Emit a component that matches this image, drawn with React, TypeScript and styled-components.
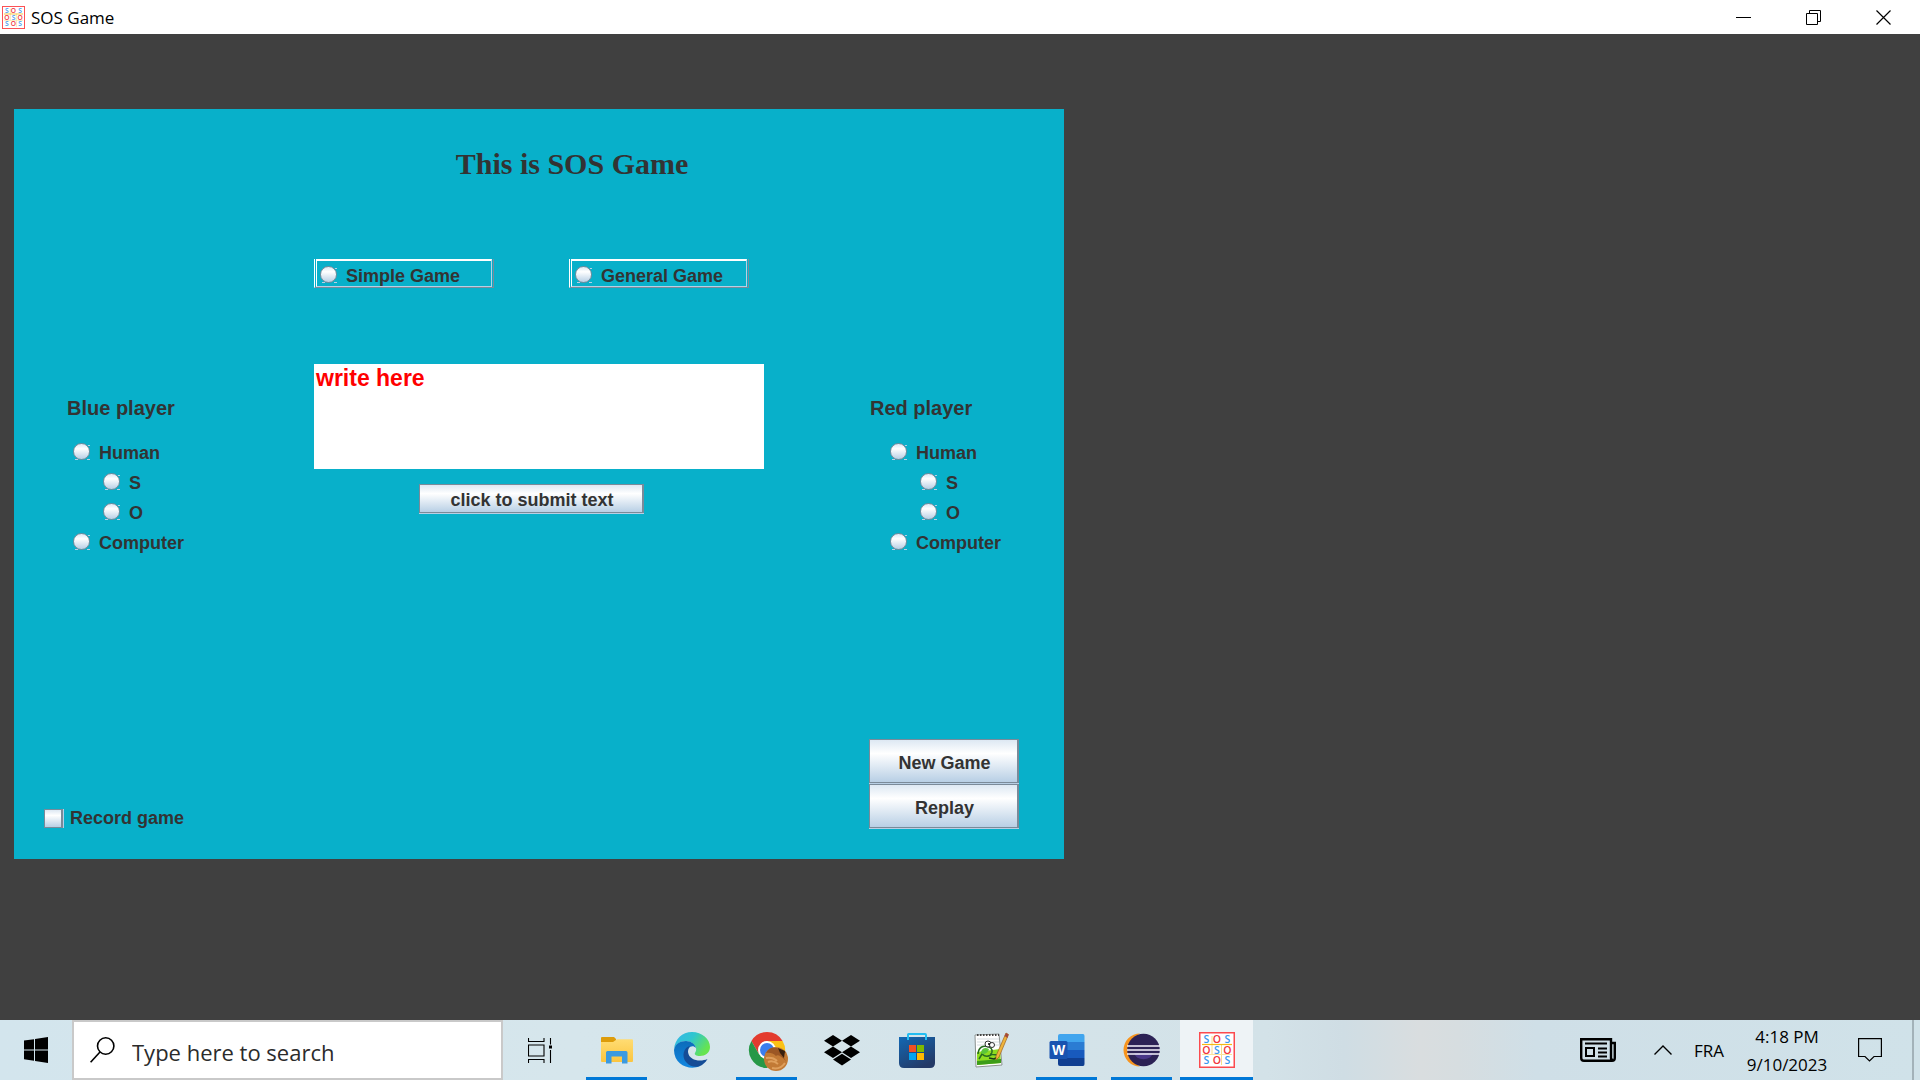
import React from 'react';
import styled, { createGlobalStyle, css } from 'styled-components';

const GlobalStyle = createGlobalStyle`
  *, *::before, *::after { box-sizing: border-box; }
  body { margin: 0; background: #404040; }
  button, input, textarea { font: inherit; color: inherit; margin: 0; }
`;

const uiFont = `'Segoe UI', 'Open Sans', 'Noto Sans', sans-serif`;
const swingFont = `Arial, 'Liberation Sans', sans-serif`;
const steel = '#7a8a99';
const mist = '#b8cfe5';
const metal = `linear-gradient(#dde8f3, #ffffff 32%, #b8cfe5)`;

const Screen = styled.div`
  display: flex;
  flex-direction: column;
  min-height: 100vh;
  background: #404040;
  color: #000;
  font-family: ${uiFont};
`;

/* ---------- window frame ---------- */

const TitleBar = styled.header`
  display: flex;
  align-items: center;
  height: 34px;
  padding: 0 2px;
  background: #fff;
`;

const WindowTitle = styled.h1`
  flex: 1;
  margin: 0 0 0 6px;
  padding-top: 1px;
  font-size: 17px;
  font-weight: 400;
  line-height: 24px;
`;

const WindowButton = styled.button`
  display: grid;
  place-items: center;
  width: 70px;
  height: 34px;
  padding: 0;
  border: 0;
  background: none;
`;

const Stage = styled.main`
  flex: 1;
  padding: 75px 14px 32px;
`;

/* ---------- game panel ---------- */

const Panel = styled.form`
  max-width: 1050px;
  background: #08b0ca;
  color: #333;
  font-family: ${swingFont};
  font-size: 18px;
  font-weight: 700;
  line-height: 24px;
`;

const Heading = styled.h2`
  margin: 0;
  padding: 37px 0 77px 66px;
  font-family: 'Times New Roman', 'Liberation Serif', serif;
  font-size: 30px;
  line-height: 36px;
  text-align: center;
`;

const Columns = styled.div`
  display: grid;
  grid-template-columns: 2fr 3fr 2fr;
`;

const Modes = styled.div`
  grid-column: 2;
  display: flex;
  gap: 75px;
  padding-bottom: 76px;
`;

const ModeFrame = styled.div`
  width: 180px;
  padding-left: 1px;
  border-left: 1px solid #fff;
  border-right: 1px solid ${steel};
  border-bottom: 1px solid ${steel};
`;

const ModeInner = styled.div`
  height: 28px;
  margin-right: 1px;
  padding: 2px 0 0 3px;
  border: 1px solid ${mist};
  border-top: 2px solid #fff;
  border-left-color: #fff;
`;

const Option = styled.label<{ $nested?: boolean }>`
  display: flex;
  align-items: center;
  gap: 9px;
  height: 30px;
  padding-left: ${(p) => (p.$nested ? 30 : 0)}px;
`;

const ModeOption = styled(Option)`
  height: 26px;
`;

const Radio = styled.input.attrs({ type: 'radio' })`
  appearance: none;
  flex: none;
  width: 17px;
  height: 17px;
  margin-bottom: 4px;
  background:
    linear-gradient(${mist}, ${mist}) 2px 100% / 3px 1px no-repeat,
    linear-gradient(${mist}, ${mist}) 100% 100% / 3px 1px no-repeat,
    linear-gradient(${mist}, ${mist}) 100% 2px / 2px 1px no-repeat;

  &::before {
    content: '';
    display: block;
    width: 17px;
    height: 17px;
    border: 1px solid ${steel};
    border-radius: 50%;
    background: ${metal};
  }

  &:checked::before {
    background: radial-gradient(circle, #333 4px, #e8f0f8 5px);
  }
`;

const Message = styled.textarea`
  display: block;
  width: 100%;
  height: 105px;
  padding: 1px 2px;
  border: 0;
  outline: 0;
  resize: none;
  overflow: hidden;
  background: #fff;
  color: #f00;
  font-size: 23px;
  line-height: 27px;
`;

const Composer = styled.div`
  display: flex;
  flex-direction: column;
  gap: 15px;
`;

const MetalButton = styled.button<{ $tall?: boolean }>`
  height: ${(p) => (p.$tall ? 44 : 29)}px;
  padding: 3px 0 0 2px;
  border: 1px solid ${steel};
  border-right-width: 2px;
  box-shadow: 0 1px 0 ${mist};
  background: ${metal};
`;

const SubmitButton = styled(MetalButton)`
  width: 50%;
  margin-left: 105px;
`;

const Player = styled.fieldset<{ $inset: number }>`
  min-width: 0;
  margin: 0;
  padding: 32px 0 0 ${(p) => p.$inset}px;
  border: 0;
`;

const PlayerName = styled.legend`
  float: left;
  width: 100%;
  padding: 0;
  margin-bottom: 18px;
  font-size: 20px;
`;

const Choices = styled.div<{ $indent: number }>`
  clear: both;
  padding-left: ${(p) => p.$indent}px;
`;

const PanelFooter = styled.div`
  display: flex;
  justify-content: space-between;
  align-items: flex-end;
  padding: 181px 45px 31px 30px;
`;

const Record = styled.label`
  display: flex;
  align-items: center;
  gap: 7px;
  line-height: 20px;
`;

const CheckBox = styled.input.attrs({ type: 'checkbox' })`
  appearance: none;
  width: 19px;
  height: 19px;
  border: 1px solid ${steel};
  border-right-width: 2px;
  box-shadow: 1px 0 0 ${mist};
  background: ${metal};

  &:checked { background: #333; }
`;

const GameActions = styled.div`
  display: flex;
  flex-direction: column;
  gap: 1px;
  width: 150px;
`;

/* ---------- taskbar ---------- */

const Taskbar = styled.footer`
  display: flex;
  height: 60px;
  background: linear-gradient(90deg, #d3e5ed, #d6e6ec 30%, #d3e2e8 66%, #cfdde4 70%, #d9dddf 74%, #d6dde0 76%, #cfdfe7 80%, #d0e2e9);
`;

const StartButton = styled.button`
  width: 72px;
  padding: 0;
  display: grid;
  place-items: center;
  border: 0;
  background: none;
`;

const Search = styled.label`
  display: flex;
  align-items: center;
  gap: 17px;
  width: 431px;
  padding-left: 16px;
  border: 2px solid #c9c9c9;
  background: #fff;
`;

const SearchInput = styled.input`
  flex: 1;
  min-width: 0;
  padding: 3px 0 0;
  border: 0;
  outline: 0;
  background: none;
  font-size: 22px;
  line-height: 30px;

  &::placeholder { color: #2b2b2b; opacity: 1; }
`;

const TaskView = styled.button`
  width: 76px;
  padding: 0 2px 0 0;
  border: 0;
  background: none;
  display: grid;
  place-items: center;
`;

const Apps = styled.nav`
  display: flex;
  flex: 1;
`;

const running = css`
  border-bottom-color: #0078d7;
`;

const AppButton = styled.button<{ $running?: boolean; $active?: boolean }>`
  display: grid;
  place-items: center;
  width: ${(p) => (p.$active ? 73 : 61)}px;
  margin: 0 ${(p) => (p.$active ? 1 : 7)}px;
  padding: 3px 0 0;
  border: 0;
  border-bottom: 3px solid transparent;
  background: ${(p) => (p.$active ? '#eef3f6' : 'none')};
  background-clip: padding-box;
  ${(p) => (p.$running || p.$active) && running}

  svg { overflow: visible; }
`;

const Tray = styled.div`
  display: flex;
  align-items: stretch;
`;

const TrayButton = styled.button<{ $width: number }>`
  display: grid;
  place-items: center;
  width: ${(p) => p.$width}px;
  padding: 0;
  border: 0;
  background: none;
  white-space: nowrap;
  font-size: 17px;
`;

const Clock = styled(TrayButton)`
  display: block;
  padding-top: 2px;
  line-height: 28px;

  time { display: block; }
`;

const ShowDesktop = styled.button`
  width: 8px;
  padding: 0;
  border: 0;
  border-left: 2px solid #a3b2b9;
  background: none;
`;

/* ---------- icons ---------- */

const RED = '#f0353c';
const BLUE = '#3b96ee';

const SosIcon = ({ size }: { size: number }) => (
  <svg width={size} height={size} viewBox="0 0 36 36" aria-hidden="true">
    <rect x="0.75" y="0.75" width="34.5" height="34.5" fill="#fff" stroke="#fb4b4f" strokeWidth="1.5" />
    <path d="M13 4V23M22.5 12V33" stroke="#f8dc8a" strokeWidth="1" />
    <path d="M3 12.5H33" stroke="#f5b915" strokeWidth="1.2" />
    <path d="M3 22.5H33" stroke="#fae29c" strokeWidth="1" />
    <g fontFamily="'Open Sans', sans-serif" fontSize="10.5" fontWeight="600" textAnchor="middle">
      {['SOS', 'OSO', 'SOS'].map((row, y) =>
        row.split('').map((letter, x) => (
          <text key={`${x}${y}`} x={7.5 + x * 10.5} y={11.3 + y * 10.3} fill={letter === 'S' ? BLUE : RED}>
            {letter}
          </text>
        )),
      )}
    </g>
  </svg>
);

const MinimizeIcon = () => (
  <svg width="15" height="15" aria-hidden="true"><path d="M0 7.5H15" stroke="#000" /></svg>
);
const RestoreIcon = () => (
  <svg width="15" height="15" fill="none" stroke="#000" aria-hidden="true">
    <path d="M.5 3.5H11.5V14.5H.5ZM3.5 3.5V.5H14.5V11.5H11.5" />
  </svg>
);
const CloseIcon = () => (
  <svg width="15" height="15" stroke="#000" strokeWidth="1.2" aria-hidden="true"><path d="M.5 .5L14.5 14.5M14.5 .5L.5 14.5" /></svg>
);

const WindowsIcon = () => (
  <svg width="24" height="26" viewBox="0 0 24 26" aria-hidden="true">
    <path d="M0 3.6L10 2.2V12.4H0ZM11 2L24 0V12.4H11ZM0 13.4H10V23.7L0 22.3ZM11 13.4H24V26L11 24Z" />
  </svg>
);
const SearchIcon = () => (
  <svg width="25" height="26" viewBox="0 0 25 26" fill="none" stroke="#000" strokeWidth="1.6" aria-hidden="true">
    <circle cx="15.7" cy="9" r="8.2" /><path d="M10 15L.6 25.2" />
  </svg>
);
const TaskViewIcon = () => (
  <svg width="24" height="25" viewBox="0 0 24 25" fill="none" stroke="#000" strokeWidth="1.1" aria-hidden="true">
    <path d="M.5 0V3.5H16V0M.5 7H16V18H.5ZM.5 25V21.5H16V25M22.5 0V6.5M22.5 12V25" />
    <rect x="21" y="7.5" width="3" height="3" fill="#000" stroke="none" />
  </svg>
);

const ExplorerIcon = () => (
  <svg width="36" height="36" viewBox="0 0 36 36" aria-hidden="true">
    <defs><linearGradient id="folder" x2="0" y2="1"><stop stopColor="#ffdc73" /><stop offset="1" stopColor="#fbc53f" /></linearGradient></defs>
    <path d="M2 6Q2 5 3 5H15L17 7V12H2Z" fill="#dd9c0b" />
    <path d="M2 10H14L18 7.3H33Q34 7.3 34 8.5V29Q34 30 33 30H3Q2 30 2 29Z" fill="url(#folder)" />
    <path d="M7 20.5Q7 19 8.5 19H27Q28.5 19 28.5 20.5V31.5H23V24.5H12.5V31.5H7Z" fill="#3b9ae0" />
  </svg>
);
const EdgeIcon = () => (
  <svg width="36" height="36" viewBox="0 0 36 36" aria-hidden="true">
    <defs>
      <linearGradient id="edgeTop" y2=".5"><stop stopColor="#35b5ea" /><stop offset=".5" stopColor="#30c6cf" /><stop offset="1" stopColor="#66e44f" /></linearGradient>
      <linearGradient id="edgeMid" x2="0" y2="1"><stop stopColor="#0c6cba" /><stop offset="1" stopColor="#1387e0" /></linearGradient>
    </defs>
    <path d="M0 17C1 7 8 0 18 0C28 0 36 7 36 15C36 21 31 24 26 24C22 24 20 22.500 21 21C25 16 19 9 12 9C6 9 2 12 0 17Z" fill="url(#edgeTop)" />
    <path d="M0 18C1 12 6 9 12 9C17 9 21 12 22 16C18 12 13 16 13.500 21C14 28 20 34 26 34C16 39 0 33 0 18Z" fill="url(#edgeMid)" />
    <path d="M16 14C10 15 7 24 12 30C17 36 24 35.500 28 33C31 31 33 28 33.500 27C27 30 15 29 14 20C14 17 15 15 16 14Z" fill="#154c96" />
  </svg>
);
const ChromeIcon = () => (
  <svg width="36" height="36" viewBox="0 0 36 36" aria-hidden="true">
    <path d="M2.400 9A18 18 0 0 1 33.600 9H18L10.200 22.500Z" fill="#e33b2e" />
    <path d="M33.600 9A18 18 0 0 1 18 36L25.800 22.500L18 9Z" fill="#fbc116" />
    <path d="M18 36A18 18 0 0 1 2.400 9L10.200 22.500H25.800Z" fill="#279847" />
    <circle cx="18" cy="18" r="9" fill="#fff" /><circle cx="18" cy="18" r="7" fill="#3b7ded" />
    <circle cx="27" cy="27" r="12" fill="#c27a35" />
    <path d="M17 21Q21 14 28 16L37 20Q32 23 37 29Q29 21 27 24Q23 20 17 21Z" fill="#9b5724" />
    <path d="M29 16L36 19L35 26L31 21Z" fill="#38200f" />
    <path d="M17 26Q24 25 28 29M19 30Q24 28 29 32M23 36Q31 38 36 31" fill="none" stroke="#dfa05d" strokeWidth="2" />
  </svg>
);
const DropboxIcon = () => (
  <svg width="36" height="32" viewBox="0 0 36 32" aria-hidden="true">
    <path d="M9 1L18 6.800L9 12.500L0 6.800ZM27 1L36 6.800L27 12.500L18 6.800ZM9 12.500L18 18.300L9 24L0 18.300ZM27 12.500L36 18.300L27 24L18 18.300ZM18 19.800L27 25.600L18 31.400L9 25.600Z" />
  </svg>
);
const StoreIcon = () => (
  <svg width="36" height="36" viewBox="0 0 36 36" aria-hidden="true">
    <defs><linearGradient id="bag" x2=".6" y2="1"><stop stopColor="#1268b4" /><stop offset="1" stopColor="#243a67" /></linearGradient></defs>
    <path d="M0 5H36V31Q36 36 31 36H5Q0 36 0 31Z" fill="url(#bag)" />
    <path d="M9 8V2.500Q9 2 9.500 2H26Q27 2 27 3V8" fill="none" stroke="#23bdf1" strokeWidth="2" />
    <path d="M10 13H17V20H10Z" fill="#f15022" /><path d="M18 13H25V20H18Z" fill="#7fba00" />
    <path d="M10 21H17V28H10Z" fill="#00a4ef" /><path d="M18 21H25V28H18Z" fill="#ffb900" />
  </svg>
);
const NotepadIcon = () => (
  <svg width="36" height="36" viewBox="0 0 36 36" aria-hidden="true">
    <path d="M1 3L25 2L28 33L2 35Z" fill="#fff" stroke="#8c9290" />
    <path d="M3 7H25M3 10H25M3 13H25" stroke="#d5dcdf" /><path d="M3 3H25" stroke="#444" strokeWidth="2" strokeDasharray="1.500 1.500" />
    <path d="M3 20L26 17L27 31L3 33Z" fill="#8edc20" /><path d="M3 29L27 27V31L3 33Z" fill="#3c9d19" />
    <path d="M4 22Q5 12 15 15Q20 17 17 23Q12 26 8 22L5 27M16 22L23 23" fill="none" stroke="#276b20" strokeWidth="1.500" />
    <path d="M7 20Q9 14 15 17Q14 22 8 22Z" fill="#5ac53a" />
    <circle cx="14" cy="12" r="3" fill="#fff" stroke="#333" /><circle cx="18" cy="13" r="2.500" fill="#fff" stroke="#333" /><circle cx="15" cy="12" r="1" />
    <path d="M15 26L20 27L24 25" fill="none" stroke="#173a14" strokeWidth="1.500" />
    <path d="M32 1L34.500 2.500L25 25L22 28V24Z" fill="#efb43b" stroke="#9e631f" strokeWidth=".7" /><path d="M32 1L34.500 2.500L33.500 6L30.500 4Z" fill="#a54a3c" />
  </svg>
);
const WordIcon = () => (
  <svg width="36" height="36" viewBox="0 0 36 36" aria-hidden="true">
    <path d="M9 10V4Q9 2 11 2H34Q35.500 2 35.500 4V10Z" fill="#41a5ee" /><path d="M9 10H35.500V18H9Z" fill="#2b7cd3" />
    <path d="M9 18H35.500V26H9Z" fill="#185abd" /><path d="M9 26H35.500V32Q35.500 34 34 34H11Q9 34 9 32Z" fill="#103f91" />
    <rect x=".5" y="9" width="18" height="18" rx="1.500" fill="#1853b0" />
    <text x="9.500" y="23" fill="#fff" fontFamily="'Liberation Sans', sans-serif" fontSize="14" fontWeight="700" textAnchor="middle">W</text>
  </svg>
);
const EclipseIcon = () => (
  <svg width="36" height="36" viewBox="0 0 36 36" aria-hidden="true">
    <path d="M16 1.500A16.500 16.500 0 0 0 16 34.500A19 19 0 0 1 16 1.500Z" fill="#f7941e" />
    <circle cx="19.500" cy="18" r="16.300" fill="#2c2255" /><path d="M10 21H29A10 9 0 0 1 10 21Z" fill="#493788" />
    <path d="M3 14H36M3 18H36M3 22H36" stroke="#f5f3fb" strokeWidth="1.700" />
  </svg>
);

const NewsIcon = () => (
  <svg width="36" height="24" viewBox="0 0 36 24" fill="none" stroke="#000" strokeWidth="2" aria-hidden="true">
    <path strokeWidth="2.400" d="M31 20V1.200H1.200V20Q1.200 22.800 4 22.800H32Q34.800 22.800 34.800 20V5H31M31 20Q31 22 33 22" />
    <path d="M5 5.500H27M18 10.500H27M18 14.500H27M18 18.500H27M6 10H14V18H6Z" />
  </svg>
);
const ChevronIcon = () => (
  <svg width="18" height="10" fill="none" stroke="#000" strokeWidth="1.400" aria-hidden="true"><path d="M.5 9.500L9 1L17.500 9.500" /></svg>
);
const NotificationIcon = () => (
  <svg width="24" height="24" fill="none" stroke="#000" strokeWidth="1.200" aria-hidden="true">
    <path d="M.6 .6H23.400V18.500H16L11.500 23L7 18.500H.6Z" />
  </svg>
);

/* ---------- composition ---------- */

const apps = [
  { name: 'File Explorer', Icon: ExplorerIcon, running: true },
  { name: 'Microsoft Edge', Icon: EdgeIcon },
  { name: 'Google Chrome', Icon: ChromeIcon, running: true },
  { name: 'Dropbox', Icon: DropboxIcon },
  { name: 'Microsoft Store', Icon: StoreIcon },
  { name: 'Notepad++', Icon: NotepadIcon },
  { name: 'Word', Icon: WordIcon, running: true },
  { name: 'Eclipse', Icon: EclipseIcon, running: true },
];

type PlayerProps = { id: string; name: string; inset: number; indent: number };

const PlayerOptions = ({ id, name, inset, indent }: PlayerProps) => (
  <Player $inset={inset}>
    <PlayerName>{name}</PlayerName>
    <Choices $indent={indent}>
      <Option><Radio name={`${id}-kind`} />Human</Option>
      <Option $nested><Radio name={`${id}-letter`} />S</Option>
      <Option $nested><Radio name={`${id}-letter`} />O</Option>
      <Option><Radio name={`${id}-kind`} />Computer</Option>
    </Choices>
  </Player>
);

export default function App() {
  return (
    <Screen>
      <GlobalStyle />
      <TitleBar>
        <SosIcon size={23} />
        <WindowTitle>SOS Game</WindowTitle>
        <WindowButton aria-label="Minimize"><MinimizeIcon /></WindowButton>
        <WindowButton aria-label="Restore"><RestoreIcon /></WindowButton>
        <WindowButton aria-label="Close"><CloseIcon /></WindowButton>
      </TitleBar>

      <Stage>
        <Panel onSubmit={(e) => e.preventDefault()}>
          <Heading>This is SOS Game</Heading>
          <Columns>
            <Modes>
              {['Simple Game', 'General Game'].map((mode) => (
                <ModeFrame key={mode}>
                  <ModeInner>
                    <ModeOption><Radio name="mode" />{mode}</ModeOption>
                  </ModeInner>
                </ModeFrame>
              ))}
            </Modes>
          </Columns>
          <Columns>
            <PlayerOptions id="blue" name="Blue player" inset={53} indent={6} />
            <Composer>
              <Message aria-label="Message" defaultValue="write here" spellCheck={false} />
              <SubmitButton type="submit">click to submit text</SubmitButton>
            </Composer>
            <PlayerOptions id="red" name="Red player" inset={106} indent={20} />
          </Columns>
          <PanelFooter>
            <Record><CheckBox />Record game</Record>
            <GameActions>
              <MetalButton type="button" $tall>New Game</MetalButton>
              <MetalButton type="button" $tall>Replay</MetalButton>
            </GameActions>
          </PanelFooter>
        </Panel>
      </Stage>

      <Taskbar>
        <StartButton aria-label="Start"><WindowsIcon /></StartButton>
        <Search>
          <SearchIcon />
          <SearchInput type="text" placeholder="Type here to search" aria-label="Search" />
        </Search>
        <TaskView aria-label="Task view"><TaskViewIcon /></TaskView>
        <Apps aria-label="Applications">
          {apps.map(({ name, Icon, running: isRunning }) => (
            <AppButton key={name} aria-label={name} $running={isRunning}><Icon /></AppButton>
          ))}
          <AppButton aria-label="SOS Game" $active><SosIcon size={36} /></AppButton>
        </Apps>
        <Tray>
          <TrayButton $width={112} aria-label="News"><NewsIcon /></TrayButton>
          <TrayButton $width={18} aria-label="Show hidden icons"><ChevronIcon /></TrayButton>
          <TrayButton $width={74}>FRA</TrayButton>
          <Clock $width={82}>
            <time>4:18 PM</time>
            <time>9/10/2023</time>
          </Clock>
          <TrayButton $width={84} aria-label="Notifications"><NotificationIcon /></TrayButton>
          <ShowDesktop aria-label="Show desktop" />
        </Tray>
      </Taskbar>
    </Screen>
  );
}
